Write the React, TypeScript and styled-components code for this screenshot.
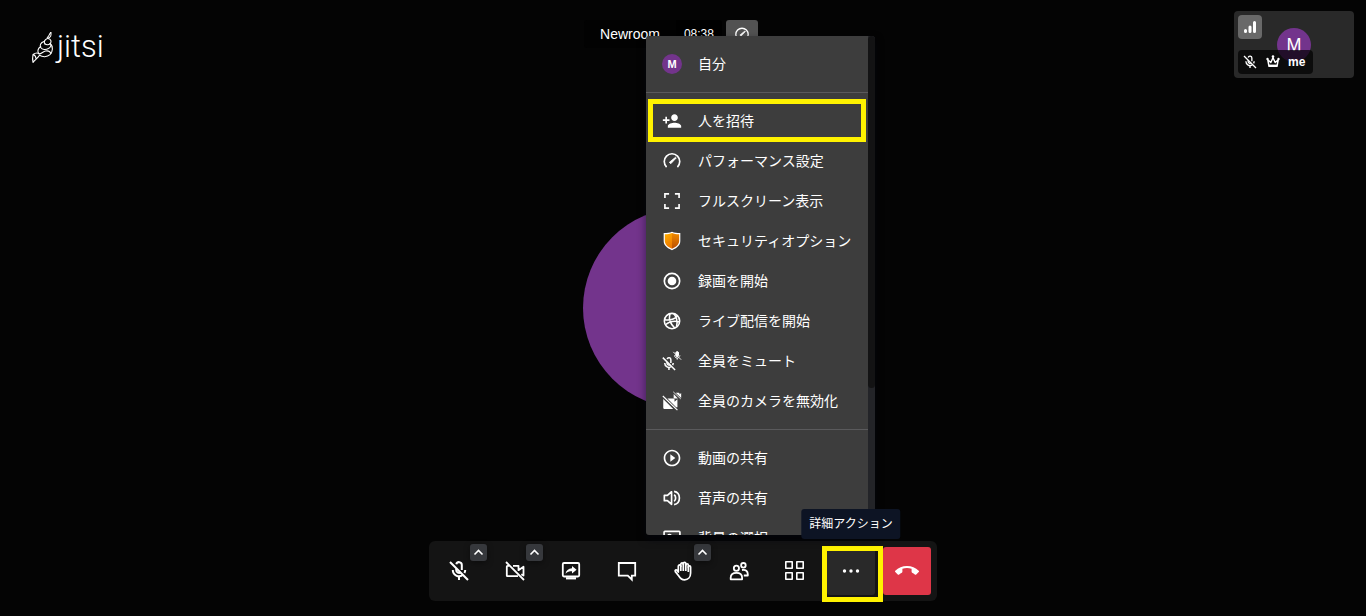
import React from "react";
import styled, { createGlobalStyle } from "styled-components";
import { MdCallEnd, MdPersonAdd, MdPlayCircleOutline } from "react-icons/md";

const GlobalStyle = createGlobalStyle`
  * { box-sizing: border-box; }
  body {
    margin: 0;
    background: #040404;
    color: #fff;
    font-family: "Liberation Sans", "Noto Sans CJK JP", sans-serif;
    font-size: 14px;
    line-height: 20px;
  }
  button {
    font: inherit;
    color: inherit;
    border: 0;
    padding: 0;
    margin: 0;
    cursor: pointer;
  }
`;

const Page = styled.div`
  position: relative;
  min-height: 100vh;
  display: flex;
  flex-direction: column;
  justify-content: space-between;
  align-items: center;
  overflow: hidden;
`;

const Stage = styled.main`
  position: absolute;
  inset: 0;
  display: flex;
  align-items: center;
  justify-content: center;
`;

const Avatar = styled.span<{ $size: number; $font: number; $bold?: boolean }>`
  flex: none;
  display: flex;
  align-items: center;
  justify-content: center;
  width: ${(p) => p.$size}px;
  height: ${(p) => p.$size}px;
  border-radius: 50%;
  background: #73348c;
  font-size: ${(p) => p.$font}px;
  font-weight: ${(p) => (p.$bold ? 700 : 400)};
`;

const Header = styled.header`
  position: relative;
  width: 100%;
  display: grid;
  grid-template-columns: 1fr auto 1fr;
  align-items: start;
  padding: 11px 12px 0;
`;

const Logo = styled.a`
  display: flex;
  align-items: flex-start;
  gap: 2px;
  margin: 20px 0 0 19px;
  color: #fff;
  text-decoration: none;
  font: 300 31px/31px Roboto, sans-serif;
`;

const Subject = styled.div`
  display: flex;
  height: 28px;
  margin-top: 9px;
  padding-right: 24px;
  line-height: 28px;
`;

const RoomName = styled.h1`
  margin: 0;
  padding: 0 16px;
  background: #020202;
  border-radius: 3px 0 0 3px;
  font-size: 14px;
  font-weight: 400;
  line-height: 28px;
`;

const Timer = styled.span`
  padding: 0 8px;
  margin-right: 4px;
  background: #000;
  border-radius: 0 3px 3px 0;
  font-size: 12px;
`;

const QualityButton = styled.button`
  display: flex;
  align-items: center;
  justify-content: center;
  width: 32px;
  height: 28px;
  border-radius: 3px;
  background: #525252;
`;

const Tile = styled.section`
  position: relative;
  justify-self: end;
  display: flex;
  align-items: center;
  justify-content: center;
  width: 120px;
  height: 67px;
  border-radius: 4px;
  background: #292929;
`;

const Signal = styled.button`
  position: absolute;
  top: 4px;
  left: 4px;
  width: 24px;
  height: 24px;
  border-radius: 4px;
  background: #696969;
  display: flex;
  align-items: center;
  justify-content: center;
`;

const TileLabel = styled.div`
  position: absolute;
  left: 4px;
  bottom: 4px;
  height: 24px;
  display: flex;
  align-items: center;
  gap: 7px;
  padding: 0 8px 0 4px;
  border-radius: 4px;
  background: rgba(0, 0, 0, 0.7);
  font-size: 12px;
  font-weight: 700;
`;

const Toolbar = styled.footer`
  position: relative;
  display: flex;
  gap: 8px;
  padding: 6px;
  margin-bottom: 15px;
  border-radius: 6px;
  background: #141414;
`;

const Slot = styled.div`
  position: relative;
  display: flex;
`;

const ToolButton = styled.button<{ $tone?: "active" | "danger" }>`
  display: flex;
  align-items: center;
  justify-content: center;
  width: 48px;
  height: 48px;
  border-radius: 3px;
  background: ${(p) =>
    p.$tone === "danger" ? "#de3648" : p.$tone === "active" ? "#292929" : "transparent"};
`;

const Caret = styled.button`
  position: absolute;
  top: -3px;
  right: -4px;
  display: flex;
  align-items: center;
  justify-content: center;
  width: 17px;
  height: 17px;
  border-radius: 3px;
  background: #36383c;
  box-shadow: 0 2px 6px rgba(0, 0, 0, 0.4);
`;

const Highlight = styled.span<{ $inset: string }>`
  position: absolute;
  inset: ${(p) => p.$inset};
  border: 5px solid #fff200;
  pointer-events: none;
`;

const Tooltip = styled.div`
  position: absolute;
  bottom: calc(100% + 8px);
  left: 50%;
  transform: translateX(-50%);
  z-index: 3;
  padding: 5px 8px;
  border-radius: 3px;
  background: #0d1424;
  font-size: 12px;
  white-space: nowrap;
`;

const Menu = styled.div`
  position: absolute;
  right: 62px;
  bottom: calc(100% + 6px);
  z-index: 2;
  display: flex;
  height: calc(100vh - 117px);
  border-radius: 3px;
  box-shadow: 0 4px 8px rgba(3, 6, 18, 0.5);
  overflow: hidden;
`;

const MenuList = styled.div`
  width: 222px;
  overflow: hidden;
  background: #3d3d3d;
`;

const MenuGroup = styled.div`
  padding: 8px 0;
  & + & {
    border-top: 1px solid #5a5a5c;
  }
`;

const MenuItem = styled.button`
  position: relative;
  display: flex;
  align-items: center;
  gap: 16px;
  width: 100%;
  height: 40px;
  padding: 0 16px;
  background: transparent;
  white-space: nowrap;
`;

const ScrollTrack = styled.div`
  width: 7px;
  background: #232428;
`;

const ScrollThumb = styled.div`
  height: 352px;
  border-radius: 4px;
  background: #131314;
`;

type IconProps = { size?: number; children?: React.ReactNode; w?: number };

const Svg = ({ size = 24, w = 2, children }: IconProps) => (
  <svg
    width={size}
    height={size}
    viewBox="0 0 24 24"
    fill="none"
    stroke="currentColor"
    strokeWidth={w}
    strokeLinejoin="round"
    aria-hidden="true"
  >
    {children}
  </svg>
);

const micShape = (
  <>
    <path d="M9.2 9.5V11a2.8 2.8 0 0 0 4.6 2.2" />
    <path d="M9.3 5.2A2.8 2.8 0 0 1 14.8 6v5" />
    <path d="M5.8 11a6.2 6.2 0 0 0 9.9 5M18.2 11a6 6 0 0 1-.8 3" />
    <path d="M12 17v4M3 3l18 18" />
  </>
);

const MicOff = ({ size }: IconProps) => <Svg size={size}>{micShape}</Svg>;

const CameraOff = () => (
  <Svg w={1.8}>
    <path d="M10 6.800h5.500v4.400l5-3.400v8.800l-2.200-1.400" />
    <path d="M6.200 6.800H4.500a.7.7 0 0 0-.7.7v9a.7.7 0 0 0 .7.7H15" />
    <path d="M3 3l18 18" />
  </Svg>
);

const ShareScreen = () => (
  <Svg w={1.8}>
    <rect x="3.800" y="4" width="16.400" height="13.500" rx="1.200" />
    <path d="M7 19.300h10" strokeWidth="2.200" />
    <path
      d="M13 7l4.600 3.800L13 14.600v-2.400c-2.600 0-4.800.500-6.500 2.600.5-3.400 2.800-5.200 6.500-5.600z"
      fill="currentColor"
      stroke="none"
    />
  </Svg>
);

const Chat = () => (
  <Svg w={1.8}>
    <path d="M3.800 4h16.400v12.600h-3.400V20.500l-4-3.900h-9z" strokeLinejoin="miter" />
  </Svg>
);

const Hand = () => (
  <Svg w={1.7}>
    <path d="M7.300 13V7.200a1.200 1.200 0 0 1 2.500 0V5.200a1.200 1.200 0 0 1 2.500 0V4.600a1.200 1.200 0 0 1 2.500 0V6a1.200 1.200 0 0 1 2.500 0v2a1.150 1.150 0 0 1 2.300 0V14c0 4.200-2.600 6.800-6 6.800-2.800 0-4.400-1.300-5.800-3.800l-3.500-4.400c-.7-1.400.8-2.300 1.700-1.400z" />
    <path d="M9.800 6.600V12M12.300 4.800V12M14.800 5v7M17.300 7.500V13" />
  </Svg>
);

const Participants = () => (
  <Svg w={1.800}>
    <circle cx="9.400" cy="9.200" r="2.600" />
    <path d="M3.700 20.300v-1.500c0-3 2-5 5.700-5s5.700 2 5.700 5v1.500z" />
    <circle cx="16.400" cy="6.300" r="2.300" />
    <path d="M15 11c3.800-.8 5.800 1.200 5.800 4.200v1.300h-4" />
  </Svg>
);

const Tiles = () => (
  <Svg w={1.600}>
    <rect x="2.800" y="2.800" width="6.400" height="6.400" />
    <rect x="13.800" y="2.800" width="6.400" height="6.400" />
    <rect x="2.800" y="13.800" width="6.400" height="6.400" />
    <rect x="13.800" y="13.800" width="6.400" height="6.400" />
  </Svg>
);

const Dots = () => (
  <svg width="24" height="24" viewBox="0 0 24 24" fill="currentColor" aria-hidden="true">
    <circle cx="5.500" cy="12" r="1.700" />
    <circle cx="12" cy="12" r="1.700" />
    <circle cx="18.500" cy="12" r="1.700" />
  </svg>
);

const ChevronUp = () => (
  <svg width="11" height="11" viewBox="0 0 11 11" fill="none" stroke="currentColor" strokeWidth="1.600" aria-hidden="true">
    <path d="M1.500 7.500l4-4 4 4" />
  </svg>
);

const Gauge = ({ size = 20 }: IconProps) => (
  <Svg size={size}>
    <path d="M5.500 19.300a9.300 9.300 0 1 1 13 0" />
    <path d="M10.500 15.300l-1.700-1.700L16.300 7.500l.8.800z" fill="currentColor" strokeWidth="1" />
  </Svg>
);

const Fullscreen = () => (
  <Svg size={20} w={2}>
    <path d="M3.500 8.500v-5h5M15.500 3.500h5v5M20.500 15.500v5h-5M8.500 20.500h-5v-5" strokeLinejoin="miter" />
  </Svg>
);

const Shield = () => (
  <svg width="20" height="20" viewBox="0 0 24 24" aria-hidden="true">
    <defs>
      <linearGradient id="shieldLeft" x1="0" y1="0" x2="0.300" y2="1">
        <stop offset="0" stopColor="#ffb000" />
        <stop offset="1" stopColor="#ee7a00" />
      </linearGradient>
      <linearGradient id="shieldRight" x1="0" y1="0" x2="0" y2="1">
        <stop offset="0" stopColor="#f08a00" />
        <stop offset="1" stopColor="#b94d00" />
      </linearGradient>
    </defs>
    <path d="M12 1c3 1.300 6 1.500 10 1.500V12c0 5-4 8.500-10 11C6 20.500 2 17 2 12V2.500C6 2.500 9 2.300 12 1z" fill="#fff" />
    <path d="M12 2.500v18.900C7 19.200 3.400 16 3.400 12V4C7 4 9.500 3.600 12 2.500z" fill="url(#shieldLeft)" />
    <path d="M12 2.500v18.900c5-2.200 8.600-5.400 8.600-9.400V4C17 4 14.500 3.600 12 2.500z" fill="url(#shieldRight)" />
  </svg>
);

const Record = () => (
  <Svg size={20}>
    <circle cx="12" cy="12" r="9.200" />
    <circle cx="12" cy="12" r="5.200" fill="currentColor" stroke="none" />
  </Svg>
);

const Live = () => (
  <Svg size={20} w={1.900}>
    <circle cx="12" cy="12" r="9.200" />
    <path d="M9.500 3.200c-1.500 6 .5 12.500 6 17.500M14 3c3.500 4 4.800 9.500 3.500 15.500M3.200 10.500c5.500 1 11.500-.5 15.300-4.500M4 16.500c5-4 10.500-5.200 17-3.500" />
  </Svg>
);

const MuteAll = () => (
  <Svg size={20} w={2.200}>
    <g transform="translate(-1.500 5.500) scale(.82)">{micShape}</g>
    <g transform="translate(12 -.5) scale(.52)">
      <path d="M9 8v3a3 3 0 0 0 5 2l1-2V6a3 3 0 0 0-6-1z" fill="currentColor" />
      {micShape}
    </g>
  </Svg>
);

const CamerasOff = () => (
  <svg width="20" height="20" viewBox="0 0 24 24" fill="currentColor" aria-hidden="true">
    <path d="M1.500 9.500L13.500 21.500H2.500a1 1 0 0 1-1-1zM6.500 9H14a1 1 0 0 1 1 1v3l3.500-3v9.500l-1.500 0z" />
    <path d="M1 6l17.500 17" stroke="currentColor" strokeWidth="1.400" />
    <path d="M14 3.500l5 5.500H15a1 1 0 0 1-1-1zM16.500 2H20a1 1 0 0 1 1 1v1.200l2-1.700v6z" />
    <path d="M13.500 1l9 8.500" stroke="currentColor" />
  </svg>
);

const Speaker = () => (
  <Svg size={20}>
    <path d="M2.800 8.800v6.400h3.700l5 4.300v-15l-5 4.300zM14.500 8.200c2.500 1.400 2.500 6.200 0 7.600M14.500 4c8.500 1.500 8.500 14.500 0 16" />
  </Svg>
);

const Picture = () => (
  <Svg size={20}>
    <rect x="2.500" y="4" width="19" height="16" rx="1" />
    <circle cx="9" cy="10" r="2" />
    <path d="M3 19l6-4 4 2 4-4 4 4" />
  </Svg>
);

const Bars = () => (
  <svg width="14" height="14" viewBox="0 0 14 14" stroke="currentColor" strokeWidth="3" strokeLinecap="round" aria-hidden="true">
    <path d="M2.500 11.500v-1M7 11.500V7M11.500 11.500v-9" />
  </svg>
);

const Crown = () => (
  <svg width="16" height="16" viewBox="-1 -1 16 16" fill="none" stroke="currentColor" strokeWidth="1.500" strokeLinejoin="round" aria-hidden="true">
    <path d="M3 11.300L1.800 4.800l3 2.700L7 2.800l2.200 4.700 3-2.700L11 11.300z" />
    <path d="M3 10.700h8" strokeWidth="2.200" />
    <g fill="currentColor" stroke="none">
      <circle cx="1.500" cy="4" r="1.200" />
      <circle cx="7" cy="1.600" r="1.300" />
      <circle cx="12.500" cy="4" r="1.200" />
    </g>
  </svg>
);

const LogoMark = () => (
  <svg width="24" height="33" viewBox="0 0 24 33" fill="none" stroke="currentColor" strokeWidth="1.100" strokeLinecap="round" strokeLinejoin="round" aria-hidden="true">
    <path d="M19.800 1.500c1 3.300-.3 4.800-3 5.800-3 1.200-4.300 3.200-3 5.500" />
    <path d="M19.800 1.500c-2 2-1.500 3.800-3.500 5M17 7.500c3 .5 3.800 3 2.300 5-1.500 1.600-4 1.500-5.500.3" />
    <path d="M13 10.500c-3.300 1-4.500 3.500-3.300 6 1.500 2.300 5 2.500 7.800 1 2.300-1.300 3-3.500 1.800-5" />
    <path d="M19.300 12.500c3 3 2.700 8-.3 11.200-3 2.600-7.500 2.500-10.500.6" />
    <path d="M9.700 15.500c-3 2-3.700 5-1.700 7.500 2.500 0 4-2.500 6.500-3 2.300-.5 4.500.3 5.500 2.500" />
    <path d="M8 22.500c-1.800-.8-4.200-.3-6 1-.5 2.500-.5 5.500 0 8 1.500-2.500 4.500-4 6.500-7.200M2 23.500c1.800.5 2.800 1.800 3 4" />
  </svg>
);

const inviteHighlight = "-2px 2px -1px 2px";
const moreHighlight = "-1px -8px -7px -5px";

const groups: { icon: React.ReactNode; label: string; marked?: boolean }[][] = [
  [{ icon: <Avatar $size={20} $font={11} $bold>M</Avatar>, label: "自分" }],
  [
    { icon: <MdPersonAdd size={20} />, label: "人を招待", marked: true },
    { icon: <Gauge />, label: "パフォーマンス設定" },
    { icon: <Fullscreen />, label: "フルスクリーン表示" },
    { icon: <Shield />, label: "セキュリティオプション" },
    { icon: <Record />, label: "録画を開始" },
    { icon: <Live />, label: "ライブ配信を開始" },
    { icon: <MuteAll />, label: "全員をミュート" },
    { icon: <CamerasOff />, label: "全員のカメラを無効化" },
  ],
  [
    { icon: <MdPlayCircleOutline size={20} />, label: "動画の共有" },
    { icon: <Speaker />, label: "音声の共有" },
    { icon: <Picture />, label: "背景の選択" },
  ],
];

const tools: { icon: React.ReactNode; label: string; caret?: boolean }[] = [
  { icon: <MicOff />, label: "マイク", caret: true },
  { icon: <CameraOff />, label: "カメラ", caret: true },
  { icon: <ShareScreen />, label: "画面共有" },
  { icon: <Chat />, label: "チャット" },
  { icon: <Hand />, label: "挙手", caret: true },
  { icon: <Participants />, label: "参加者" },
  { icon: <Tiles />, label: "タイル表示" },
];

export default function App() {
  return (
    <>
      <GlobalStyle />
      <Page>
        <Stage>
          <Avatar $size={200} $font={80} />
        </Stage>
        <Header>
          <Logo href="#">
            <LogoMark />
            jitsi
          </Logo>
          <Subject>
            <RoomName>Newroom</RoomName>
            <Timer>08:38</Timer>
            <QualityButton aria-label="パフォーマンス設定">
              <Gauge size={16} />
            </QualityButton>
          </Subject>
          <Tile>
            <Avatar $size={34} $font={18}>M</Avatar>
            <Signal aria-label="接続状態">
              <Bars />
            </Signal>
            <TileLabel>
              <MicOff size={16} />
              <Crown />
              <span>me</span>
            </TileLabel>
          </Tile>
        </Header>
        <Toolbar>
          {tools.map((t) => (
            <Slot key={t.label}>
              <ToolButton aria-label={t.label}>{t.icon}</ToolButton>
              {t.caret && (
                <Caret aria-label={`${t.label}の設定`}>
                  <ChevronUp />
                </Caret>
              )}
            </Slot>
          ))}
          <Slot>
            <ToolButton $tone="active" aria-label="詳細アクション">
              <Dots />
            </ToolButton>
            <Highlight $inset={moreHighlight} />
            <Tooltip role="tooltip">詳細アクション</Tooltip>
          </Slot>
          <Slot>
            <ToolButton $tone="danger" aria-label="退出">
              <MdCallEnd size={24} />
            </ToolButton>
          </Slot>
          <Menu>
            <MenuList>
              {groups.map((items, i) => (
                <MenuGroup key={i}>
                  {items.map((item) => (
                    <MenuItem key={item.label}>
                      {item.icon}
                      <span>{item.label}</span>
                      {item.marked && <Highlight $inset={inviteHighlight} />}
                    </MenuItem>
                  ))}
                </MenuGroup>
              ))}
            </MenuList>
            <ScrollTrack>
              <ScrollThumb />
            </ScrollTrack>
          </Menu>
        </Toolbar>
      </Page>
    </>
  );
}
